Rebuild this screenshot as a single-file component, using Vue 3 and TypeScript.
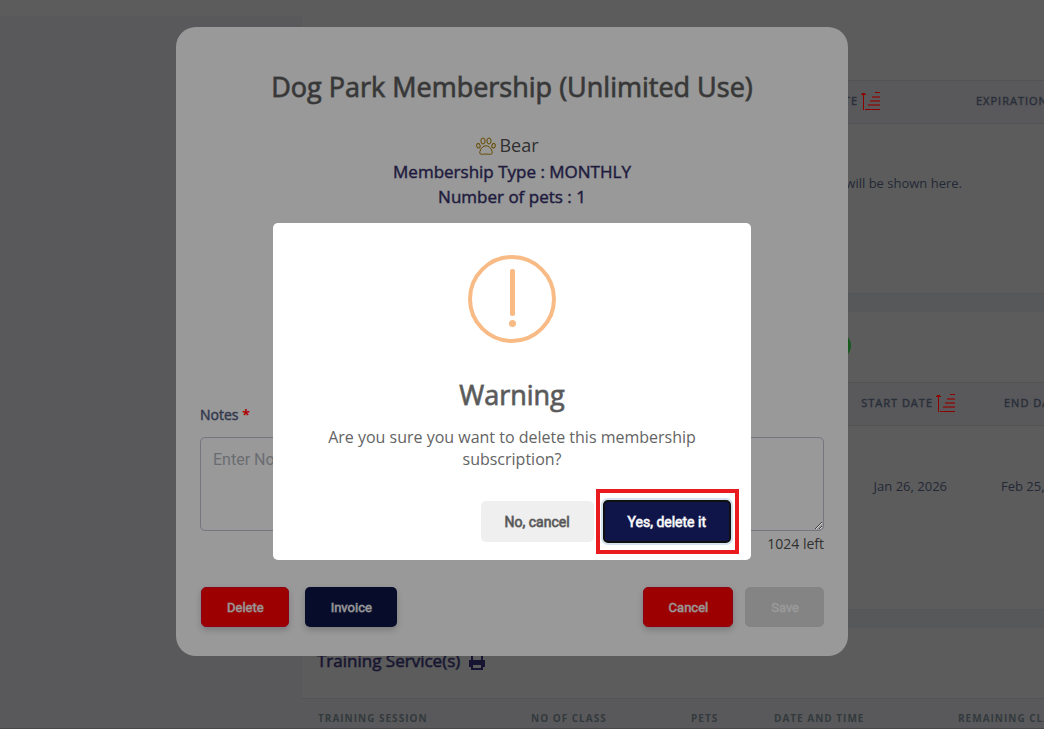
<script setup lang="ts">
import { ref } from 'vue'

interface Column {
  label: string
  width: number
  sortable?: boolean
}

const membershipColumns: Column[] = [
  { label: 'Start date', width: 658, sortable: true },
  { label: 'Expiration date', width: 300 },
]
const packageColumns: Column[] = [
  { label: 'Start date', width: 686, sortable: true },
  { label: 'End date', width: 272 },
]
const trainingColumns: Column[] = [
  { label: 'Training session', width: 213 },
  { label: 'No of class', width: 160 },
  { label: 'Pets', width: 83 },
  { label: 'Date and time', width: 184 },
  { label: 'Remaining classes', width: 318 },
]

const notes = ref('')
</script>

<template>
  <div class="page">
    <header class="topbar"></header>
    <div class="body">
      <aside class="sidebar"></aside>
      <main class="content">
        <section class="panel first">
          <div class="heading"></div>
          <table>
            <colgroup><col v-for="c in membershipColumns" :key="c.label" :style="{ width: c.width + 'px' }" /></colgroup>
            <thead>
              <tr>
                <th v-for="c in membershipColumns" :key="c.label" :class="{ end: c.sortable, wide: c.sortable }">
                  <span class="th">{{ c.label }}
                    <svg v-if="c.sortable" class="sort" viewBox="0 0 19 19"><path d="M2 1h1v17H2zM1 1h3v1H1zM0 2h5v1H0zM4 17h15v1H4zM14 0h5v1h-5z" /><path class="soft" d="M7 12h12v2H7zM9 8h10v2H9zM11 4h8v2h-8z" /></svg>
                  </span>
                </th>
              </tr>
            </thead>
            <tbody>
              <tr><td colspan="2" class="message">All of the memberships will be shown here.</td></tr>
            </tbody>
          </table>
        </section>

        <section class="panel second">
          <div class="heading"><span class="badge"></span></div>
          <table>
            <colgroup><col v-for="c in packageColumns" :key="c.label" :style="{ width: c.width + 'px' }" /></colgroup>
            <thead>
              <tr>
                <th v-for="c in packageColumns" :key="c.label" :class="{ end: c.sortable }">
                  <span class="th">{{ c.label }}
                    <svg v-if="c.sortable" class="sort" viewBox="0 0 19 19"><path d="M2 1h1v17H2zM1 1h3v1H1zM0 2h5v1H0zM4 17h15v1H4zM14 0h5v1h-5z" /><path class="soft" d="M7 12h12v2H7zM9 8h10v2H9zM11 4h8v2h-8z" /></svg>
                  </span>
                </th>
              </tr>
            </thead>
            <tbody>
              <tr><td class="end date">Jan 26, 2026</td><td class="last">Feb 25, 2026</td></tr>
            </tbody>
          </table>
        </section>

        <section class="panel third">
          <div class="heading">
            <h3>Training Service(s)</h3>
            <svg class="printer" viewBox="0 0 18 18"><path d="M4 8V2h8l2 2v4M4 14H2V9h14v5h-2M4 12h10v5H4z" /><path d="M2 8h14v4H2z" class="solid" /></svg>
          </div>
          <table class="muted">
            <colgroup><col v-for="c in trainingColumns" :key="c.label" :style="{ width: c.width + 'px' }" /></colgroup>
            <thead>
              <tr><th v-for="c in trainingColumns" :key="c.label">{{ c.label }}</th></tr>
            </thead>
          </table>
        </section>
      </main>
    </div>

    <div class="layer">
      <section class="modal" role="dialog" aria-labelledby="membership-title">
        <h1 id="membership-title">Dog Park Membership (Unlimited Use)</h1>
        <div class="summary">
          <p class="pet">
            <svg class="paw" viewBox="0 0 20 18">
              <ellipse cx="7" cy="4" rx="2.100" ry="3" /><ellipse cx="13" cy="4" rx="2.100" ry="3" />
              <ellipse cx="2.400" cy="8.800" rx="1.700" ry="2.300" transform="rotate(-12 2.400 8.800)" /><ellipse cx="17.600" cy="8.800" rx="1.700" ry="2.300" transform="rotate(12 17.600 8.800)" />
              <path d="M10 8.800C7.200 8.800 5.600 10.700 4.500 13c-1.100 2.200-1.200 4.200 1 4.300 1.600.1 2.600-.3 4.500-.3s2.900.4 4.500.3c2.200-.1 2.100-2.100 1-4.300-1.100-2.300-2.700-4.200-5.500-4.200z" />
            </svg>
            Bear
          </p>
          <p class="fact">Membership Type : MONTHLY</p>
          <p class="fact">Number of pets : 1</p>
        </div>
        <div class="notes">
          <label for="notes">Notes <span class="star">*</span></label>
          <textarea id="notes" v-model="notes" placeholder="Enter Notes" maxlength="1024"></textarea>
          <p class="left">{{ 1024 - notes.length }} left</p>
        </div>
        <footer class="actions">
          <button class="btn red" type="button">Delete</button>
          <button class="btn navy" type="button">Invoice</button>
          <button class="btn red push" type="button">Cancel</button>
          <button class="btn off" type="button" disabled>Save</button>
        </footer>
      </section>
    </div>

    <div class="layer">
      <section class="alert" role="alertdialog" aria-labelledby="alert-title">
        <div class="icon"><span class="bar"></span><span class="dot"></span></div>
        <h2 id="alert-title">Warning</h2>
        <p class="question">Are you sure you want to delete this membership subscription?</p>
        <footer class="choices">
          <button class="choice no" type="button">No, cancel</button>
          <span class="marked"><button class="choice yes" type="button">Yes, delete it</button></span>
        </footer>
      </section>
    </div>
  </div>
</template>

<style>
body {
  background: #5c5c5c;
}
</style>

<style scoped>
* {
  box-sizing: border-box;
}
.page {
  position: relative;
  display: flex;
  flex-direction: column;
  height: 100vh;
  overflow: hidden;
  background: #5c5c5c;
  border-bottom: 1px solid #4b4747;
  font-family: 'Open Sans', 'Noto Sans', sans-serif;
}
h1, h2, h3, p {
  margin: 0;
}
.topbar {
  flex: 0 0 16px;
}
.body {
  display: flex;
  flex: 1;
  min-height: 0;
}
.sidebar {
  flex: 0 0 302px;
  background: #59595b;
}
.content {
  display: flex;
  flex-direction: column;
  flex: 1;
  gap: 18px;
  min-width: 0;
  overflow: hidden;
  background: #565859;
}
.panel {
  flex: none;
  background: #5c5c5c;
  border-bottom: 1px solid #545556;
}
.first {
  min-height: 278px;
}
.second {
  min-height: 298px;
}
.heading {
  display: flex;
  align-items: center;
  gap: 8px;
  height: 70px;
  padding: 0 15px 4px;
}
.first .heading {
  height: 64px;
}
table {
  width: 958px;
  table-layout: fixed;
  border-collapse: collapse;
}
th {
  height: 43px;
  padding: 0 16px 2px;
  background: #59595b;
  border-top: 1px solid #525355;
  border-bottom: 1px solid #525355;
  color: #272d38;
  font-size: 11px;
  font-weight: 400;
  letter-spacing: 1px;
  line-height: 16px;
  text-align: left;
  text-transform: uppercase;
  white-space: nowrap;
  -webkit-text-stroke: 1px #272d3866;
}
.muted th {
  padding-bottom: 4px;
  color: #33393d;
  font-size: 10px;
  font-weight: 700;
  -webkit-text-stroke: 0;
}
.th {
  display: inline-flex;
  align-items: center;
  gap: 3px;
}
th.end {
  padding-right: 33px;
  text-align: right;
}
th.wide {
  padding-right: 80px;
}
.sort {
  width: 19px;
  height: 19px;
  fill: #8c0000;
  shape-rendering: crispEdges;
}
.soft {
  fill: #7c2525;
}
td {
  padding: 0 16px;
  color: #242836;
  font-size: 13px;
  line-height: 20px;
}
.message {
  height: 118px;
  padding-right: 298px;
  text-align: right;
}
td.date {
  height: 120px;
  padding-right: 41px;
  text-align: right;
}
td.last {
  padding-left: 13px;
}
.badge {
  width: 27px;
  height: 27px;
  margin-left: 507px;
  border-radius: 50%;
  background: #175a20;
}
h3 {
  color: #161430;
  font-size: 17px;
  font-weight: 400;
  line-height: 24px;
  -webkit-text-stroke: 1px #16143088;
}
.printer {
  width: 18px;
  height: 18px;
  fill: none;
  stroke: #161430;
  stroke-width: 2;
}
.solid {
  fill: #161430;
  stroke: none;
}
.layer {
  position: absolute;
  inset: 0;
  display: flex;
  align-items: flex-start;
  justify-content: center;
  padding-right: 20px;
}
.modal {
  width: 672px;
  max-width: 100%;
  margin-top: 27px;
  padding: 40px 24px 29px;
  border-radius: 20px;
  background: #999;
}
h1 {
  color: #373737;
  font-size: 27px;
  font-weight: 400;
  line-height: 40px;
  text-align: center;
  -webkit-text-stroke: 1px #373737bb;
}
.summary {
  min-height: 297px;
  padding-top: 25px;
  text-align: center;
}
.pet {
  display: flex;
  align-items: center;
  justify-content: center;
  gap: 3px;
  padding-right: 9px;
  color: #303030;
  font-size: 18px;
  font-weight: 400;
  line-height: 27px;
}
.paw {
  width: 20px;
  height: 18px;
  fill: none;
  stroke: #654a00;
}
.fact {
  color: #1d1a3d;
  font-size: 17px;
  font-weight: 400;
  line-height: 25px;
  -webkit-text-stroke: 1px #1d1a3d77;
}
.notes {
  display: flex;
  flex-direction: column;
}
label {
  margin-bottom: 11px;
  color: #30374c;
  font-size: 14px;
  font-weight: 400;
  line-height: 22px;
  -webkit-text-stroke: 1px #30374c77;
}
.star {
  color: #b00000;
  font-weight: 700;
  -webkit-text-stroke: 0;
}
textarea {
  display: block;
  width: 100%;
  height: 94px;
  padding: 12px;
  border: 1px solid #74757f;
  border-radius: 5px;
  background: transparent;
  font-family: Roboto, sans-serif;
  font-size: 16px;
  line-height: 20px;
}
textarea::placeholder {
  color: #6a6d72;
}
.left {
  margin-top: 2px;
  color: #303030;
  font-size: 14px;
  line-height: 22px;
  text-align: right;
}
.actions {
  display: flex;
  gap: 12px;
  margin-top: 32px;
  padding-left: 1px;
}
.btn {
  height: 40px;
  padding: 0 24px 0 25px;
  border: 1px solid transparent;
  border-radius: 5px;
  box-shadow: 0 3px 6px #00000033;
  color: #999;
  font-family: Roboto, sans-serif;
  font-size: 13px;
  font-weight: 400;
  -webkit-text-stroke: 1px #99999999;
}
.red {
  border-color: #8f0018;
  background: #9c0000;
}
.navy {
  margin-left: 4px;
  background: #080c2b;
}
.push {
  margin-left: auto;
}
.off {
  border-color: #848484;
  background: #848484;
  box-shadow: none;
}
.alert {
  width: 478px;
  max-width: 100%;
  margin-top: 223px;
  border-radius: 5px;
  background: #fff;
  text-align: center;
}
.icon {
  display: flex;
  flex-direction: column;
  align-items: center;
  gap: 4px;
  width: 88px;
  height: 88px;
  margin: 32px auto 0;
  padding-top: 10px;
  border: 4px solid #f8bb86;
  border-radius: 50%;
}
.bar {
  width: 5px;
  height: 47px;
  border-radius: 2px;
  background: #f8bb86;
}
.dot {
  width: 7px;
  height: 7px;
  border-radius: 50%;
  background: #f8bb86;
}
h2 {
  padding-top: 32px;
  color: #595959;
  font-size: 27px;
  font-weight: 400;
  line-height: 40px;
  -webkit-text-stroke: 1px #595959bb;
}
.question {
  margin: 11px 20px 0;
  padding: 0 10px;
  color: #646464;
  font-size: 16px;
  line-height: 22px;
}
.choices {
  display: flex;
  align-items: center;
  justify-content: flex-end;
  gap: 9px;
  margin-top: 30px;
  padding: 0 20px 17px;
}
.choice {
  height: 43px;
  padding: 0 24px;
  border: 0;
  border-radius: 5px;
  font-family: Roboto, sans-serif;
  font-size: 14px;
  font-weight: 400;
}
.no {
  height: 41px;
  background: #efefef;
  color: #555;
  -webkit-text-stroke: 1px #555555aa;
}
.marked {
  position: relative;
}
.marked::after {
  position: absolute;
  inset: -11px -8px -11px -7px;
  border: 4px solid #ea1b1e;
  content: '';
  pointer-events: none;
}
.choice.yes {
  display: block;
  padding: 0 23px;
  border: 2px solid #101010;
  box-shadow: 0 0 0 2px #d3e2ee;
  background: #101549;
  color: #fff;
  -webkit-text-stroke: 1px #ffffffaa;
}
</style>
